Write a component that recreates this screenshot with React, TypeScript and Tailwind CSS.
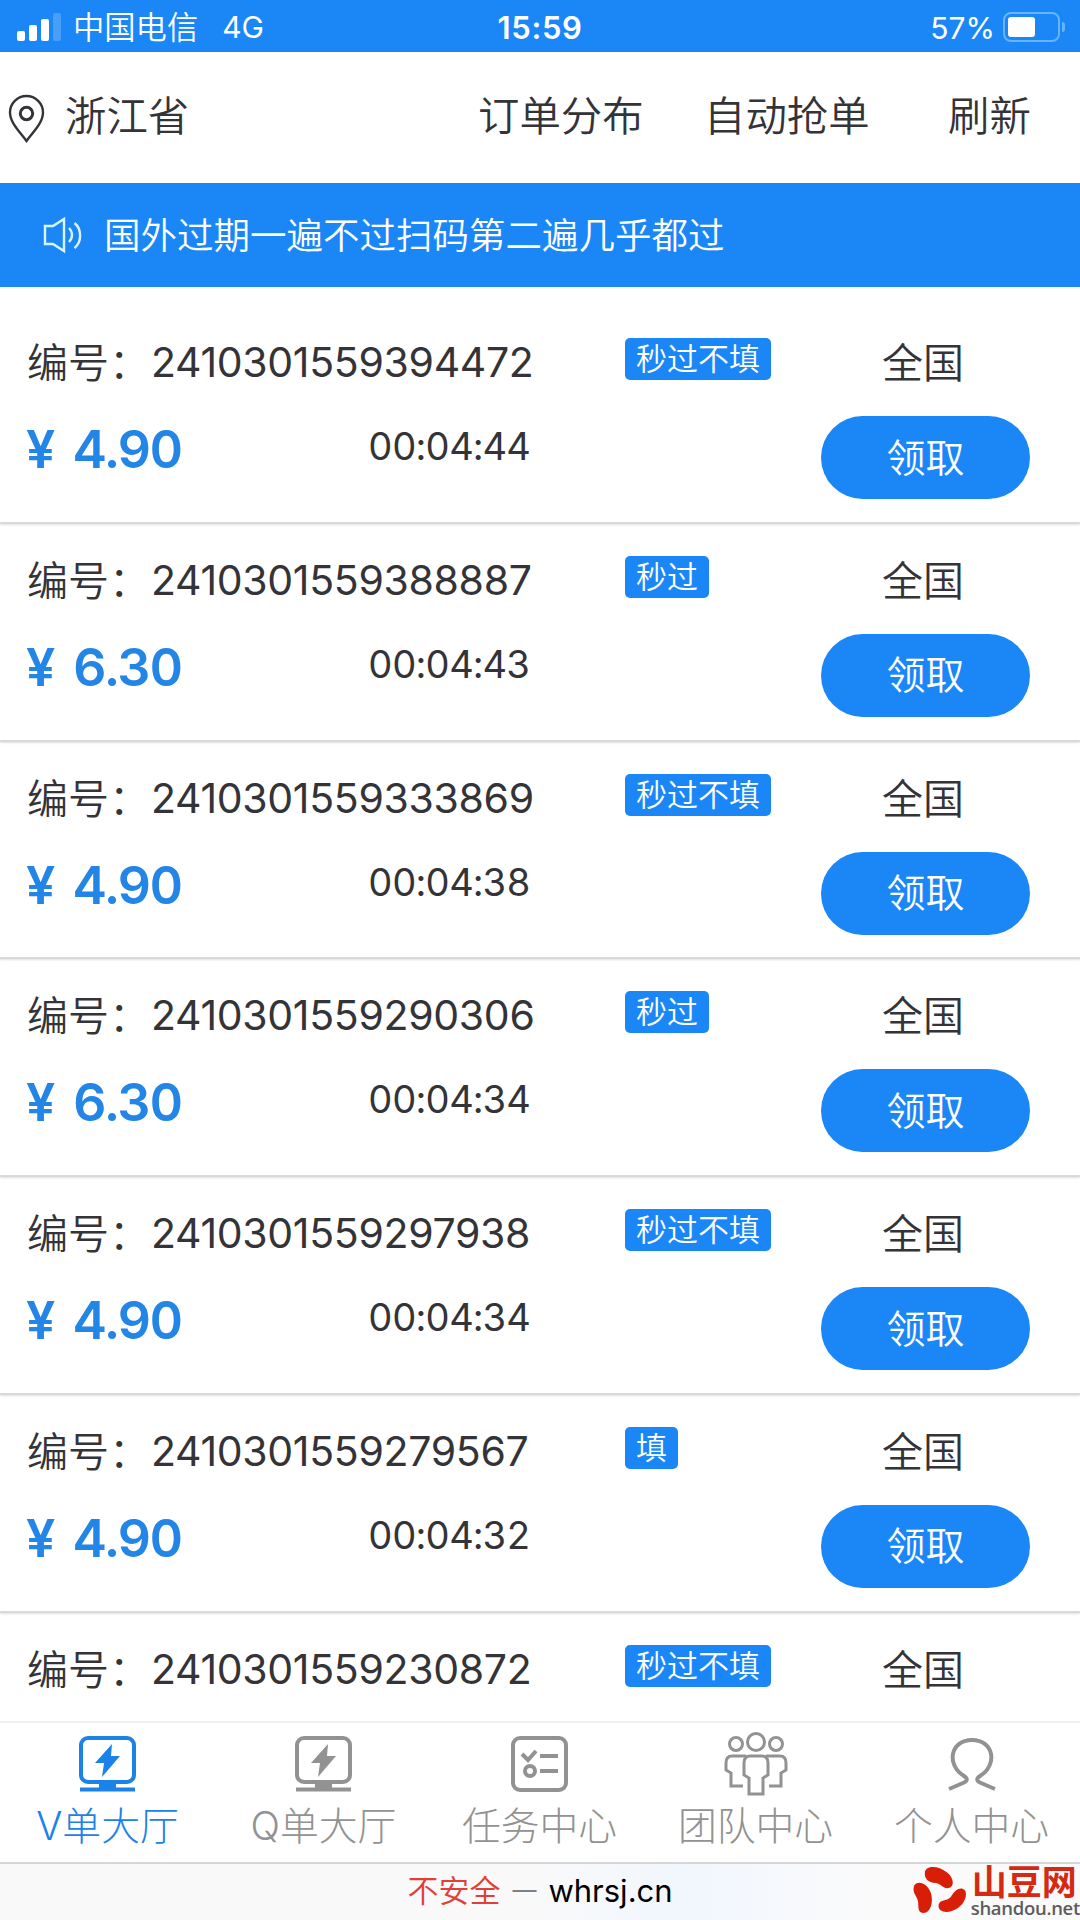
import type { ReactNode } from 'react';

interface Order {
  id: string;
  price?: string;
  time?: string;
  tag: string;
}

const orders: Order[] = [
  { id: '2410301559394472', price: '4.90', time: '00:04:44', tag: '秒过不填' },
  { id: '2410301559388887', price: '6.30', time: '00:04:43', tag: '秒过' },
  { id: '2410301559333869', price: '4.90', time: '00:04:38', tag: '秒过不填' },
  { id: '2410301559290306', price: '6.30', time: '00:04:34', tag: '秒过' },
  { id: '2410301559297938', price: '4.90', time: '00:04:34', tag: '秒过不填' },
  { id: '2410301559279567', price: '4.90', time: '00:04:32', tag: '填' },
  { id: '2410301559230872', tag: '秒过不填' },
];

function StatusBar() {
  return (
    <div className="flex h-[52px] shrink-0 items-center bg-[#1b87f7] pt-[3px] text-[30px] leading-none text-white">
      <div className="flex flex-1 items-center">
        <div className="ml-[17px] flex h-7 items-end gap-1">
          <i className="h-[10px] w-2 rounded-[2px] bg-white" />
          <i className="h-4 w-2 rounded-[2px] bg-white" />
          <i className="h-[22px] w-2 rounded-[2px] bg-white" />
          <i className="h-7 w-2 rounded-[2px] bg-white/20" />
        </div>
        <span className="ml-[12px] pt-[2px] text-[31.3px] font-[350]">中国电信</span>
        <span className="ml-6">4G</span>
      </div>
      <span className="text-[31px] font-semibold tracking-[0.6px]">15:59</span>
      <div className="flex flex-1 items-center justify-end">
        <span className="mr-2 text-[30px]">57%</span>
        <div className="mb-[2px] h-[30px] w-[57px] rounded-[8px] border-2 border-[#66b4fb] p-[3px]">
          <div className="h-full w-[27px] rounded-[3px] bg-white" />
        </div>
        <i className="mr-[15px] mb-[2px] ml-[2px] h-[10px] w-[3px] rounded-r-full bg-[#66b4fb]" />
      </div>
    </div>
  );
}

function Header() {
  return (
    <div className="flex h-[131px] shrink-0 items-center pb-[2px] text-[41.4px] leading-none font-[350]">
      <svg className="mt-[4px] ml-2 h-[50px] w-[37px]" viewBox="0 0 37 50" fill="none" stroke="currentColor" strokeWidth="2.4">
        <path d="M18.5 47C12 38 2 29 2 18.5A16.5 16.5 0 0 1 35 18.5C35 29 25 38 18.5 47Z" />
        <circle cx="18.5" cy="19.5" r="6.2" strokeWidth="3" />
      </svg>
      <span className="ml-[20px] w-[413px]">浙江省</span>
      <span className="w-[226px]">订单分布</span>
      <span className="w-[244px]">自动抢单</span>
      <span>刷新</span>
    </div>
  );
}

function Notice() {
  return (
    <div className="flex h-[104px] shrink-0 items-center bg-[#1b87f7] text-[36.5px] leading-none font-[350] text-white">
      <svg className="ml-[42px] h-[38px] w-[42px]" viewBox="0 0 42 38" fill="none" stroke="#d8f6ff" strokeWidth="2.4">
        <path d="M3 10H11L22 3V35L11 28H3Z" />
        <path d="M27 12C31 16 31 22 27 26M32.5 7C40 13 40 26 32.5 32" />
      </svg>
      <span className="ml-5 pt-[3px]">国外过期一遍不过扫码第二遍几乎都过</span>
    </div>
  );
}

function OrderRow({ order }: { order: Order }) {
  return (
    <div className="h-[217.8px] shrink-0 border-b-2 border-[#dadada] pt-[32px] pl-[27px] shadow-[0_1px_2px_rgba(0,0,0,0.12)]">
      <div className="flex h-[78px] items-start text-[41px] leading-[49px] font-[350]">
        <div className="flex w-[598px]">
          <span className="w-[124px] pt-px">编号：</span>
          <span className="font-normal tracking-[-0.32px]">{order.id}</span>
        </div>
        <div className="w-[257px]">
          <span className="inline-block h-[42px] rounded-[5px] bg-[#1b87f7] px-[11px] align-top text-[31px] leading-[41px] text-white">
            {order.tag}
          </span>
        </div>
        <span className="pt-px">全国</span>
      </div>
      {order.price && (
        <div className="flex items-start">
          <div className="flex w-[341px] text-[52px] leading-[67px] font-semibold text-[#2385e6]">
            <span className="-ml-px w-[47px]">¥</span>
            <span className="tracking-[-1.6px] tabular-nums">{order.price}</span>
          </div>
          <span className="w-[453px] text-[38px] leading-[60px] tracking-[-0.75px] tabular-nums">{order.time}</span>
          <button className="h-[83px] w-[209px] rounded-full bg-[#1b87f7] text-[39px] leading-[80px] font-[350] text-white">
            领取
          </button>
        </div>
      )}
    </div>
  );
}

function MonitorIcon() {
  return (
    <svg className="h-[64px] w-[64px]" viewBox="0 0 64 64" fill="none" stroke="currentColor" strokeWidth="4">
      <rect x="5" y="6" width="53" height="44" rx="7" />
      <path d="M36 12L19 31H28L26 45L44 24H35Z" fill="currentColor" stroke="none" />
      <path d="M23 50H40V57H23Z" fill="currentColor" stroke="none" />
      <path d="M4 57.5H59" />
    </svg>
  );
}

function TaskIcon() {
  return (
    <svg className="h-[64px] w-[64px]" viewBox="0 0 64 64" fill="none" stroke="currentColor" strokeWidth="4">
      <rect x="5" y="6" width="53" height="52" rx="7" />
      <path d="M14 22L20 28L28 19M32 24H50M32 39H50" />
      <circle cx="22" cy="39" r="5" />
    </svg>
  );
}

function TeamIcon() {
  return (
    <svg className="h-[64px] w-[64px]" viewBox="0 0 64 64" fill="none" stroke="currentColor" strokeWidth="3">
      <circle cx="32" cy="10" r="8.5" />
      <circle cx="12" cy="12" r="6.5" />
      <circle cx="52" cy="12" r="6.5" />
      <path d="M26 24H38Q44 24 44 31V43L39 46V62H25V46L20 43V31Q20 24 26 24Z" />
      <path d="M22 24H8Q2 24 2 31V38L7 41V54H19M42 24H56Q62 24 62 31V38L57 41V54H45" />
    </svg>
  );
}

function UserIcon() {
  return (
    <svg className="h-[64px] w-[64px]" viewBox="0 0 64 64" fill="none" stroke="currentColor" strokeWidth="4">
      <path d="M9 57L23 51Q30 48 24 44C6 33 10 8 32 8C54 8 58 33 40 44Q34 48 41 51L55 57" />
    </svg>
  );
}

interface TabProps {
  icon: ReactNode;
  label: string;
  active?: boolean;
}

function Tab({ icon, label, active }: TabProps) {
  return (
    <div className={`flex flex-1 flex-col items-center pt-[9px] ${active ? 'text-[#1b82e8]' : 'text-[#929292]'}`}>
      {icon}
      <span className="mt-[8px] -ml-px text-[38.8px] leading-[44px] font-light">{label}</span>
    </div>
  );
}

function Watermark() {
  return (
    <div className="absolute right-0 bottom-0 flex h-[57px] w-[170px] items-start">
      <svg className="mt-[2px] ml-[2px] h-[52px] w-[56px]" viewBox="0 0 56 52" fill="#d81e06">
        <path d="M13 7C14 0 27 0 36 8C42 13 43 22 37 23C31 24 30 19 24 18C16 18 12 13 13 7Z" />
        <path d="M2 21C5 15 15 17 19 28C22 38 18 48 12 48C5 48 7 42 6 36C5 31 0 28 2 21Z" />
        <path d="M53 25C57 31 51 43 40 46C32 49 25 45 27 39C29 34 34 37 39 32C43 25 49 21 53 25Z" />
      </svg>
      <div className="flex flex-col">
        <span className="ml-[4px] h-[38px] text-[35px] leading-[38px] font-bold text-[#d42a14]">山豆网</span>
        <span className="ml-[3px] font-['Open_Sans'] text-[18.5px] leading-[14px] font-semibold tracking-[-0.3px] text-[#5d5d5d]">
          shandou.net
        </span>
      </div>
    </div>
  );
}

export default function App() {
  return (
    <div className="relative flex h-[1920px] w-[1080px] flex-col overflow-hidden bg-white font-['Inter','Noto_Sans_CJK_SC',sans-serif] text-[#333338]">
      <StatusBar />
      <Header />
      <Notice />
      <div className="flex min-h-0 flex-1 flex-col overflow-hidden pt-[19px]">
        {orders.map((order) => (
          <OrderRow key={order.id} order={order} />
        ))}
      </div>
      <div className="flex h-[141px] shrink-0 border-t-2 border-[#f1f1f1] bg-white">
        <Tab icon={<MonitorIcon />} label="V单大厅" active />
        <Tab icon={<MonitorIcon />} label="Q单大厅" />
        <Tab icon={<TaskIcon />} label="任务中心" />
        <Tab icon={<TeamIcon />} label="团队中心" />
        <Tab icon={<UserIcon />} label="个人中心" />
      </div>
      <div className="flex h-[58px] shrink-0 items-center justify-center border-t-2 border-[#d6d6d6] bg-linear-to-r from-[#f9f9fa] from-50% via-[#f1f7fe] via-63% to-[#fafafb] to-80% pb-[4px] text-[31px] leading-none">
        <span className="font-[350] text-[#e0403a]">不安全</span>
        <span className="mx-[12px] text-[24px] text-[#808080]">—</span>
        <span className="text-black">whrsj.cn</span>
      </div>
      <Watermark />
    </div>
  );
}
